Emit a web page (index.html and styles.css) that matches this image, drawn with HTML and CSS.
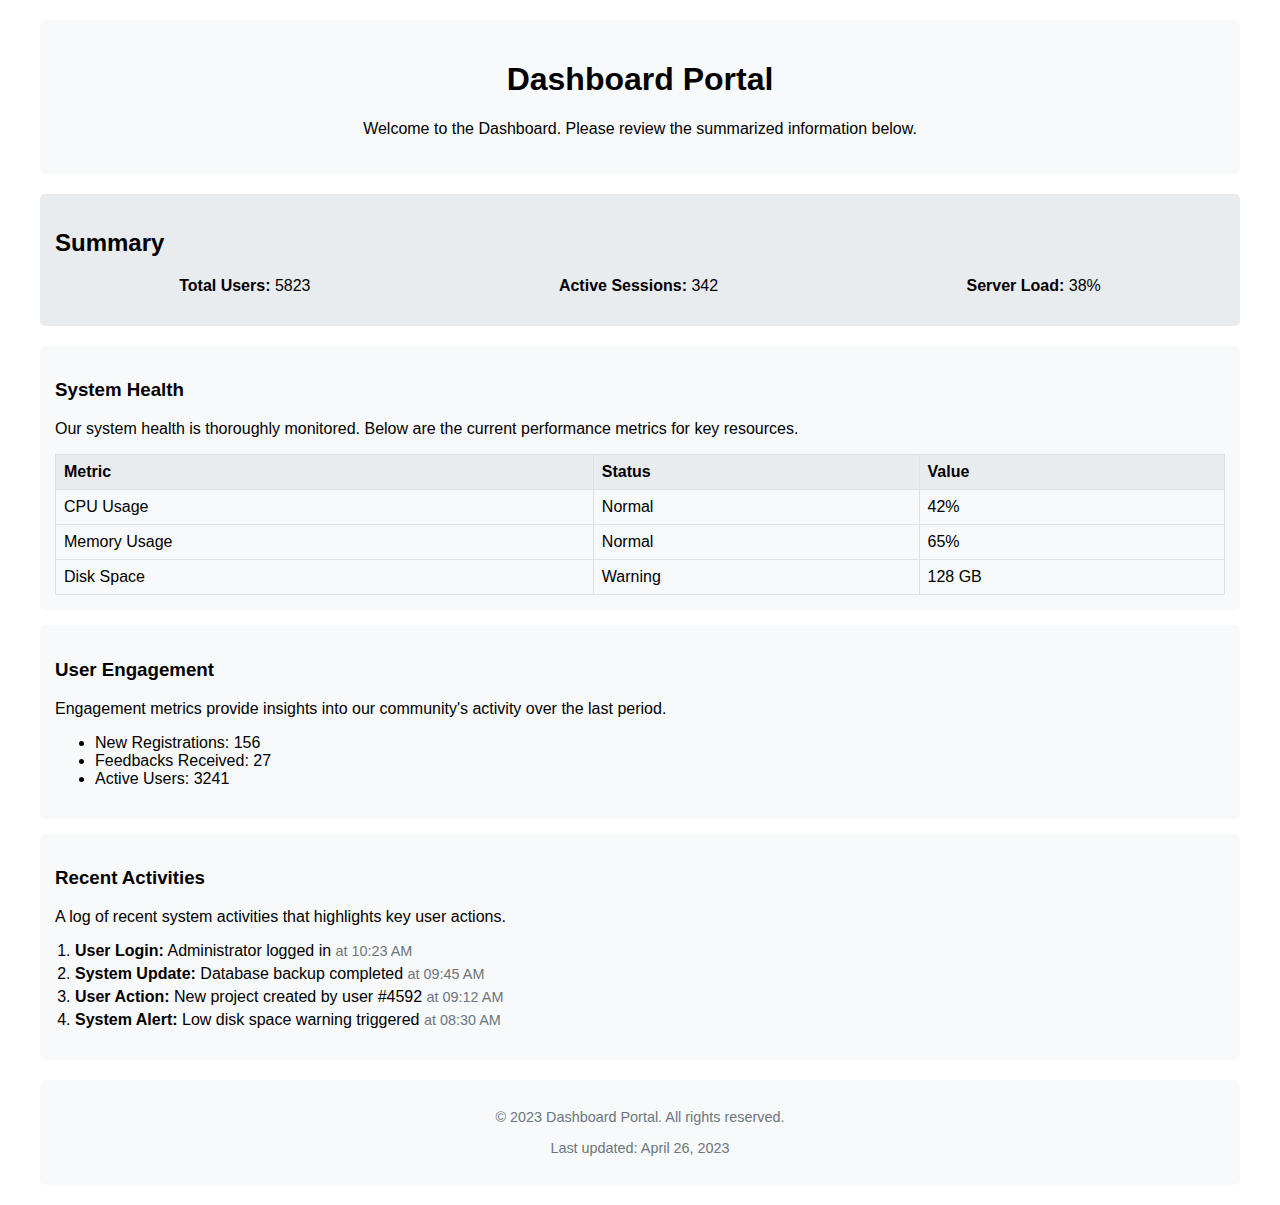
FILE: index.html
```html
<!DOCTYPE html>
<html lang="en">
<head>
<meta charset="utf-8">
<title>Dashboard Portal</title>
<link rel="stylesheet" href="styles.css">
</head>
<body>
<div class="page">
  <header class="panel header gap-lg">
    <h1>Dashboard Portal</h1>
    <p>Welcome to the Dashboard. Please review the summarized information below.</p>
  </header>

  <section class="panel summary gap-lg">
    <h2>Summary</h2>
    <div class="stats">
      <div><strong>Total Users:</strong> 5823</div>
      <div><strong>Active Sessions:</strong> 342</div>
      <div><strong>Server Load:</strong> 38%</div>
    </div>
  </section>

  <section class="panel gap-xs">
    <h3>System Health</h3>
    <p>Our system health is thoroughly monitored. Below are the current performance metrics for key resources.</p>
    <table class="metrics">
      <thead>
        <tr><th>Metric</th><th>Status</th><th>Value</th></tr>
      </thead>
      <tbody>
        <tr><td>CPU Usage</td><td>Normal</td><td>42%</td></tr>
        <tr><td>Memory Usage</td><td>Normal</td><td>65%</td></tr>
        <tr><td>Disk Space</td><td>Warning</td><td>128 GB</td></tr>
      </tbody>
    </table>
  </section>

  <section class="panel gap-xs">
    <h3>User Engagement</h3>
    <p>Engagement metrics provide insights into our community's activity over the last period.</p>
    <ul class="engagement">
      <li>New Registrations: 156</li>
      <li>Feedbacks Received: 27</li>
      <li>Active Users: 3241</li>
    </ul>
  </section>

  <section class="panel gap-lg">
    <h3>Recent Activities</h3>
    <p>A log of recent system activities that highlights key user actions.</p>
    <ol class="activities">
      <li><strong>User Login:</strong> Administrator logged in <span class="time">at 10:23 AM</span></li>
      <li><strong>System Update:</strong> Database backup completed <span class="time">at 09:45 AM</span></li>
      <li><strong>User Action:</strong> New project created by user #4592 <span class="time">at 09:12 AM</span></li>
      <li><strong>System Alert:</strong> Low disk space warning triggered <span class="time">at 08:30 AM</span></li>
    </ol>
  </section>

  <footer class="panel footer">
    <p>&copy; 2023 Dashboard Portal. All rights reserved.</p>
    <p>Last updated: April 26, 2023</p>
  </footer>
</div>
</body>
</html>
```

FILE: styles.css
```css
html, body {
  margin: 0;
  padding: 0;
  background: #ffffff;
}

body {
  font-family: "Liberation Sans", Arial, sans-serif;
  font-size: 16px;
  color: #000000;
  padding: 20px 0;
}

.page {
  max-width: 1200px;
  margin: 0 auto;
}

.panel {
  background: #f8f9fa;
  border-radius: 5px;
  padding: 15px;
}

.gap-lg {
  margin-bottom: 20px;
}

.gap-xs {
  margin-bottom: 15px;
}

.header {
  padding: 20px;
  text-align: center;
}

.header h1 {
  font-size: 32px;
  margin: 21.44px 0;
}

.header p {
  margin: 16px 0;
}

.summary {
  background: #e9ecef;
}

.summary h2 {
  font-size: 24px;
  margin: 19.92px 0;
}

.stats {
  display: flex;
  justify-content: space-around;
  margin-bottom: 16px;
}

h3 {
  font-size: 18.72px;
  margin: 18.72px 0;
}

p {
  margin: 16px 0;
}

.metrics {
  width: 100%;
  border-collapse: collapse;
}

.metrics th,
.metrics td {
  border: 1px solid #dee2e6;
  padding: 8px;
  line-height: 18px;
  text-align: left;
}

.metrics th {
  background: #e9ecef;
  font-weight: bold;
}

.engagement {
  margin: 16px 0;
  padding-left: 40px;
}

.activities {
  margin: 16px 0;
  padding-left: 20px;
}

.activities li + li {
  margin-top: 5px;
}

.time {
  color: #6c757d;
  font-size: 14.4px;
}

.footer {
  text-align: center;
  color: #6c757d;
  font-size: 14.4px;
}

.footer p {
  margin: 14.4px 0;
}
```
